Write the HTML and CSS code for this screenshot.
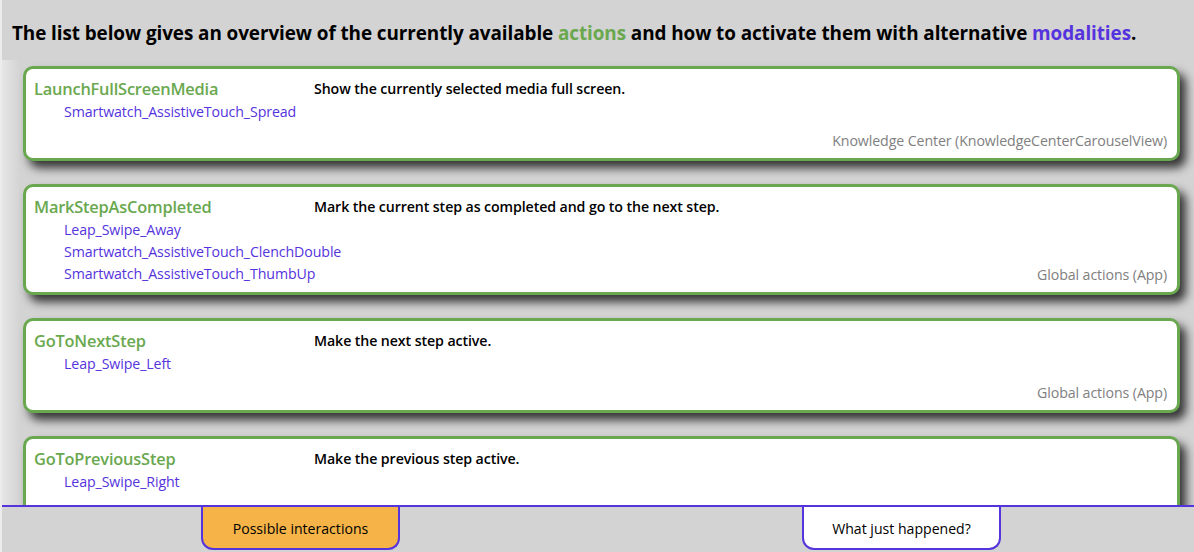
FILE: index.html
```html
<!DOCTYPE html>
<html lang="en">
<head>
<meta charset="utf-8">
<title>Possible interactions</title>
<link rel="stylesheet" href="styles.css">
</head>
<body>
<div class="page">
  <header class="header">
    <h1 class="title">The list below gives an overview of the currently available <span class="hl-actions">actions</span> and how to activate them with alternative <span class="hl-modalities">modalities</span>.</h1>
  </header>
  <main class="list">
    <section class="card">
      <div class="left">
        <div class="action">LaunchFullScreenMedia</div>
        <ul class="mods">
          <li>Smartwatch_AssistiveTouch_Spread</li>
        </ul>
      </div>
      <div class="desc">Show the currently selected media full screen.</div>
      <div class="context">Knowledge Center (KnowledgeCenterCarouselView)</div>
    </section>
    <section class="card">
      <div class="left">
        <div class="action">MarkStepAsCompleted</div>
        <ul class="mods">
          <li>Leap_Swipe_Away</li>
          <li>Smartwatch_AssistiveTouch_ClenchDouble</li>
          <li>Smartwatch_AssistiveTouch_ThumbUp</li>
        </ul>
      </div>
      <div class="desc">Mark the current step as completed and go to the next step.</div>
      <div class="context">Global actions (App)</div>
    </section>
    <section class="card">
      <div class="left">
        <div class="action">GoToNextStep</div>
        <ul class="mods">
          <li>Leap_Swipe_Left</li>
        </ul>
      </div>
      <div class="desc">Make the next step active.</div>
      <div class="context">Global actions (App)</div>
    </section>
    <section class="card">
      <div class="left">
        <div class="action">GoToPreviousStep</div>
        <ul class="mods">
          <li>Leap_Swipe_Right</li>
        </ul>
      </div>
      <div class="desc">Make the previous step active.</div>
      <div class="context">Global actions (App)</div>
    </section>
  </main>
  <nav class="tabs">
    <div class="tab tab-active">Possible interactions</div>
    <div class="tab">What just happened?</div>
  </nav>
</div>
</body>
</html>
```
FILE: styles.css
```css
* { box-sizing: border-box; }
html, body { margin: 0; padding: 0; }
body {
  background: #d3d3d3;
  font-family: "Open Sans", "Noto Sans", sans-serif;
  color: #000;
  width: 1194px;
  height: 552px;
  overflow: hidden;
}
.page {
  display: flex;
  flex-direction: column;
  height: 552px;
  border-left: 2px solid #ececec;
}
.header {
  padding: 20px 10px 0 10px;
  height: 60px;
  flex: none;
}
.title {
  margin: 0;
  font-size: 18.9px;
  font-weight: 700;
  line-height: 26px;
  letter-spacing: -0.08px;
  white-space: nowrap;
}
.hl-actions { color: #6aa84f; }
.hl-modalities { color: #5533dd; }

.list {
  flex: 1;
  overflow: hidden;
  display: flex;
  flex-direction: column;
  gap: 23px;
  padding: 6px 14px 0 21px;
  background: linear-gradient(to right, #e6e6e6 0, #d3d3d3 18px);
}
.card {
  flex: none;
  background: #fff;
  border: 3px solid #6aa84f;
  border-radius: 10px;
  box-shadow: 6px 7px 10px rgba(0, 0, 0, 0.75);
  min-height: 95px;
  display: grid;
  grid-template-columns: 288px 1fr;
  grid-template-rows: 1fr;
}
.left {
  grid-column: 1;
  grid-row: 1;
  padding: 8px 0 7px 8px;
}
.action {
  color: #6aa84f;
  font-size: 16.4px;
  font-weight: 600;
  line-height: 24px;
  letter-spacing: -0.2px;
}
.mods {
  list-style: none;
  margin: 0;
  padding: 0 0 0 30px;
}
.mods li {
  color: #5533dd;
  font-size: 14.2px;
  line-height: 22px;
  letter-spacing: -0.1px;
}
.desc {
  grid-column: 2;
  grid-row: 1;
  padding-top: 10px;
  font-size: 14.2px;
  font-weight: 600;
  line-height: 20px;
  letter-spacing: -0.1px;
}
.context {
  grid-column: 1 / -1;
  grid-row: 1;
  justify-self: end;
  align-self: end;
  padding: 0 10px 7px 0;
  color: #808080;
  font-size: 14.2px;
  line-height: 20px;
  letter-spacing: -0.1px;
}

.tabs {
  flex: none;
  height: 47px;
  border-top: 2px solid #5533dd;
  display: flex;
  gap: 402px;
  padding-left: 199px;
}
.tab {
  width: 199px;
  height: 43px;
  background: #fff;
  border: 2px solid #5533dd;
  border-top: none;
  border-radius: 0 0 12px 12px;
  display: flex;
  align-items: center;
  justify-content: center;
  font-size: 14.1px;
  padding-top: 1px;
}
.tab-active { background: #f6b448; }
```
